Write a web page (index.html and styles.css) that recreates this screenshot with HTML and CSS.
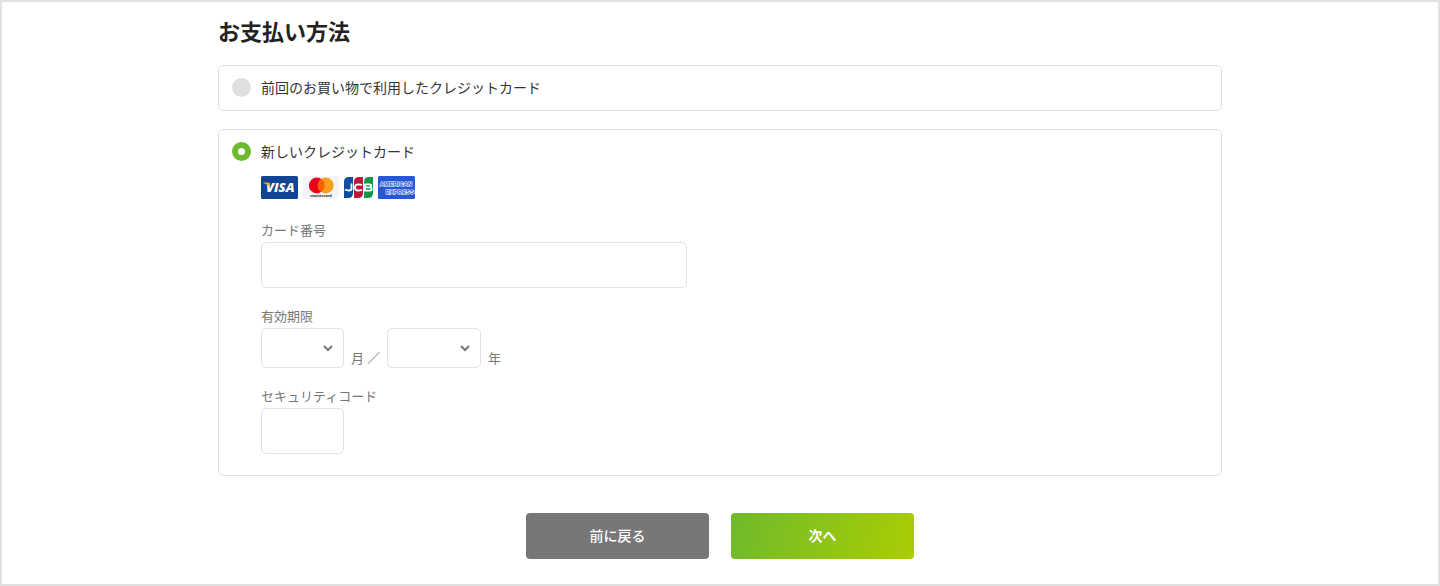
FILE: index.html
```html
<!DOCTYPE html>
<html lang="ja">
<head>
<meta charset="utf-8">
<meta name="viewport" content="width=device-width, initial-scale=1">
<title>お支払い方法</title>
<link rel="stylesheet" href="styles.css">
</head>
<body>
<main class="page">
  <form class="payment">
    <h1 class="title">お支払い方法</h1>

    <section class="card">
      <label class="option">
        <input class="radio" type="radio" name="method">
        <span>前回のお買い物で利用したクレジットカード</span>
      </label>
    </section>

    <section class="card card-open">
      <label class="option">
        <input class="radio" type="radio" name="method" checked>
        <span>新しいクレジットカード</span>
      </label>

      <div class="details">
        <div class="brands">
          <svg width="37" height="23" viewBox="0 0 37 23" role="img" aria-label="VISA">
            <rect width="37" height="23" rx="1.500" fill="#114594"/>
            <text class="visa-text" x="5" y="16">VISA</text>
            <path d="M2.500 6.500h4.500q1.200 0 1.400 1l.8 4Q6.500 8.300 2.500 7.100z" fill="#f4a92a"/>
          </svg>
          <svg width="36" height="23" viewBox="0 0 36 23" role="img" aria-label="mastercard">
            <rect width="36" height="23" rx="1.500" fill="#f4f4f4"/>
            <circle cx="13.800" cy="9.500" r="7.900" fill="#eb001b"/>
            <circle cx="22.700" cy="9.500" r="7.900" fill="#f79e1b"/>
            <path d="M18.250 3a7.900 7.900 0 0 1 0 13a7.900 7.900 0 0 1 0-13z" fill="#ff5f00"/>
            <text class="mc-text" x="18" y="21" text-anchor="middle">mastercard</text>
          </svg>
          <svg width="29" height="23" viewBox="0 0 29 23" role="img" aria-label="JCB">
            <path d="M5 1h4v16q0 5-5 5H0V6q0-5 5-5z" fill="#0f4f9e"/>
            <path d="M15 1h4v16q0 5-5 5h-4V6q0-5 5-5z" fill="#bd1638"/>
            <path d="M25 1h4v16q0 5-5 5h-4V6q0-5 5-5z" fill="#16954a"/>
            <g fill="none" stroke="#fff" stroke-width="1.800">
              <path d="M7.500 7.500v5q0 2-2.500 2-2 0-4-1"/>
              <path d="M18 8.800q-2-.500-3.800-.500-3.200 0-3.200 3.100t3.200 3.100q1.800 0 3.800-.500"/>
              <path d="M21 8.300h4.500q1.700 0 1.700 1.500t-1.700 1.600H21h4.800q1.800 0 1.800 1.600t-1.800 1.600H21V7.400"/>
            </g>
          </svg>
          <svg width="37" height="23" viewBox="0 0 37 23" role="img" aria-label="AMERICAN EXPRESS">
            <rect width="37" height="23" rx="1.500" fill="#2557d6"/>
            <text class="amex-text" x="18" y="10" text-anchor="middle">AMERICAN</text>
            <text class="amex-text" x="22" y="18" text-anchor="middle">EXPRESS</text>
          </svg>
        </div>

        <div class="field">
          <label class="label" for="number">カード番号</label>
          <input class="box box-number" id="number" type="text" inputmode="numeric">
        </div>

        <div class="field">
          <label class="label" for="month">有効期限</label>
          <div class="expiry">
            <span class="picker picker-month">
              <select class="select" id="month"><option></option><option>01</option><option>12</option></select>
              <svg class="chevron" width="12" height="8" viewBox="0 0 12 8" aria-hidden="true"><path d="M2 2l4 4 4-4"/></svg>
            </span>
            <span class="unit">月 ／</span>
            <span class="picker picker-year">
              <select class="select" id="year" aria-label="年"><option></option><option>2025</option><option>2026</option></select>
              <svg class="chevron" width="12" height="8" viewBox="0 0 12 8" aria-hidden="true"><path d="M2 2l4 4 4-4"/></svg>
            </span>
            <span class="unit">年</span>
          </div>
        </div>

        <div class="field">
          <label class="label" for="code">セキュリティコード</label>
          <input class="box box-code" id="code" type="text" inputmode="numeric">
        </div>
      </div>
    </section>

    <div class="actions">
      <button class="button button-back" type="button">前に戻る</button>
      <button class="button button-next" type="submit">次へ</button>
    </div>
  </form>
</main>
</body>
</html>
```
FILE: styles.css
```css
* {
  box-sizing: border-box;
}

body {
  margin: 0;
  background: #fff;
  color: #333;
  font-family: "Noto Sans CJK JP", sans-serif;
  font-size: 14px;
}

.page {
  min-height: 100vh;
  padding: 12px 16px 24px;
  border: 2px solid #e0e0e0;
}

.payment {
  max-width: 1004px;
  margin: 0 auto;
}

.title {
  margin: 0 0 19px;
  color: #222;
  font-size: 22px;
  font-weight: 700;
  line-height: 32px;
}

.card {
  padding: 9px 13px 11px;
  border: 1px solid #e2e2e2;
  border-radius: 5px;
}

.card-open {
  margin-top: 18px;
  padding-bottom: 21px;
}

.option {
  display: flex;
  align-items: center;
  gap: 10px;
  line-height: 24px;
}

.radio {
  appearance: none;
  flex: none;
  width: 19px;
  height: 19px;
  margin: 0;
  border-radius: 50%;
  background: #e0e0e0;
}

.radio:checked {
  border: 6px solid #6fba2c;
  background: #fff;
}

.details {
  padding: 13px 0 0 29px;
}

.brands {
  display: flex;
  gap: 5px;
  margin-bottom: 21px;
}

.visa-text {
  fill: #fff;
  font: italic 800 13px "Open Sans", sans-serif;
}

.mc-text {
  fill: #222;
  font: 700 4px "Liberation Sans", sans-serif;
}

.amex-text {
  fill: #2557d6;
  stroke: #fff;
  stroke-width: 1px;
  paint-order: stroke;
  font: 700 6px "Liberation Sans", sans-serif;
}

.field {
  display: flex;
  flex-direction: column;
  align-items: flex-start;
  gap: 2px;
}

.field + .field {
  margin-top: 18px;
}

.label,
.unit {
  color: #777;
  font-size: 13px;
  line-height: 20px;
}

.box,
.select {
  width: 100%;
  height: 46px;
  padding: 0 12px;
  border: 1px solid #e2e2e2;
  border-radius: 5px;
  background: #fff;
  color: #333;
  font: inherit;
}

.box-number {
  max-width: 426px;
}

.box-code {
  max-width: 83px;
}

.expiry {
  display: flex;
  align-items: flex-end;
  gap: 7px;
}

.picker {
  position: relative;
  display: flex;
}

.picker-month {
  width: 83px;
}

.picker-year {
  width: 94px;
}

.select {
  appearance: none;
  height: 40px;
}

.chevron {
  position: absolute;
  top: 16px;
  right: 10px;
  fill: none;
  stroke: #777;
  stroke-width: 2;
  pointer-events: none;
}

.actions {
  display: flex;
  justify-content: center;
  gap: 22px;
  margin-top: 37px;
}

.button {
  width: 183px;
  height: 46px;
  padding: 0 0 2px;
  border: 0;
  border-radius: 4px;
  color: #fff;
  font: inherit;
  font-weight: 500;
}

.button-back {
  background: #777;
}

.button-next {
  background: linear-gradient(100deg, #6fba2c, #aacd03);
  font-weight: 700;
}
```
